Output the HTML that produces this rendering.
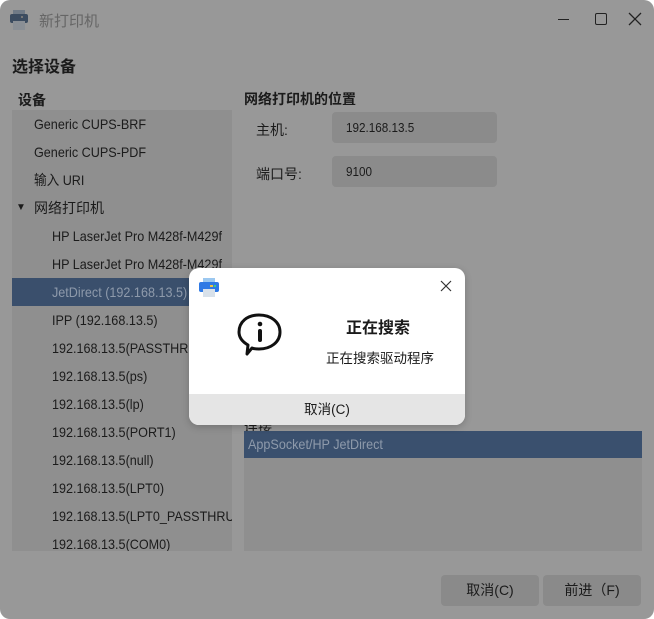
<!DOCTYPE html>
<html><head><meta charset="utf-8"><style>
*{margin:0;padding:0;box-sizing:border-box}
body{width:654px;height:619px;background:#fff;font-family:"Liberation Sans","Noto Sans CJK SC",sans-serif;overflow:hidden;position:relative;color:#1b1b1b;font-size:14px}
.win{position:absolute;left:0;top:0;width:654px;height:619px;background:#989898;border-radius:10px}
.a{position:absolute;white-space:nowrap}
.list{position:absolute;left:12px;top:110px;width:220px;height:441px;background:#8f8f8f;overflow:hidden}
.it{position:absolute;height:28px;line-height:28px;white-space:nowrap}
.n{display:inline-block;transform:scaleX(0.9);transform-origin:left center}
.inp{position:absolute;left:332px;width:165px;height:31px;background:#8b8b8b;border-radius:4px;line-height:31px;padding-left:14px;font-size:13px}
.btn{position:absolute;top:575px;width:98px;height:31px;background:#8a8a8a;border-radius:4px;text-align:center;line-height:31px}
.dlg{position:absolute;left:189px;top:268px;width:276px;height:157px;background:#fff;border-radius:10px;overflow:hidden;box-shadow:0 2px 8px rgba(0,0,0,.2)}
</style></head><body>
<div class="win">
<svg class="a" style="left:9px;top:9px" width="20" height="22" viewBox="0 0 20 22"><rect x="4" y="1" width="12" height="5" fill="#707a86"/><rect x="1" y="5" width="18" height="9" rx="2" fill="#3c4c60"/><rect x="4" y="12" width="12" height="9" fill="#8a8f95"/><rect x="12" y="7" width="2" height="2" fill="#777"/></svg>
<div class="a" style="left:39px;top:10px;font-size:15px;color:#666">新打印机</div>
<div class="a" style="left:558px;top:19px;width:11px;height:1px;background:#222"></div>
<div class="a" style="left:595px;top:13px;width:12px;height:12px;border:1.3px solid #222;border-radius:2px"></div>
<svg class="a" style="left:628px;top:12px" width="14" height="14"><path d="M1 1L13 13M13 1L1 13" stroke="#222" stroke-width="1.3"/></svg>
<div class="a" style="left:12px;top:53px;font-size:16px;font-weight:bold">选择设备</div>
<div class="list">
<div class="it" style="left:22px;top:0"><span class="n">Generic CUPS-BRF</span></div>
<div class="it" style="left:22px;top:28px"><span class="n">Generic CUPS-PDF</span></div>
<div class="it" style="left:22px;top:56px"><span class="n">输入 URI</span></div>
<div class="it" style="left:4px;top:84px;font-size:10px">▼</div>
<div class="it" style="left:22px;top:84px">网络打印机</div>
<div class="it" style="left:40px;top:112px"><span class="n">HP LaserJet Pro M428f-M429f</span></div>
<div class="it" style="left:40px;top:140px"><span class="n">HP LaserJet Pro M428f-M429f</span></div>
<div class="it" style="left:0;top:168px;width:220px;background:#3a4f6c;color:#8e9aab;padding-left:40px"><span class="n">JetDirect (192.168.13.5)</span></div>
<div class="it" style="left:40px;top:196px"><span class="n">IPP (192.168.13.5)</span></div>
<div class="it" style="left:40px;top:224px"><span class="n">192.168.13.5(PASSTHRU)</span></div>
<div class="it" style="left:40px;top:252px"><span class="n">192.168.13.5(ps)</span></div>
<div class="it" style="left:40px;top:280px"><span class="n">192.168.13.5(lp)</span></div>
<div class="it" style="left:40px;top:308px"><span class="n">192.168.13.5(PORT1)</span></div>
<div class="it" style="left:40px;top:336px"><span class="n">192.168.13.5(null)</span></div>
<div class="it" style="left:40px;top:364px"><span class="n">192.168.13.5(LPT0)</span></div>
<div class="it" style="left:40px;top:392px"><span class="n">192.168.13.5(LPT0_PASSTHRU)</span></div>
<div class="it" style="left:40px;top:420px"><span class="n">192.168.13.5(COM0)</span></div>
</div>
<div class="a" style="left:18px;top:90px;font-weight:bold">设备</div>
<div class="a" style="left:244px;top:89px;font-weight:bold">网络打印机的位置</div>
<div class="a" style="left:256px;top:120px">主机:</div>
<div class="inp" style="top:112px"><span class="n">192.168.13.5</span></div>
<div class="a" style="left:256px;top:164px">端口号:</div>
<div class="inp" style="top:156px"><span class="n">9100</span></div>
<div class="a" style="left:244px;top:417px">连接</div>
<div class="a" style="left:244px;top:431px;width:398px;height:120px;background:#8f8f8f"></div>
<div class="a" style="left:244px;top:431px;width:398px;height:27px;background:#3a506e;color:#8e9aab;line-height:27px;padding-left:4px"><span class="n">AppSocket/HP JetDirect</span></div>
<div class="btn" style="left:441px">取消(C)</div>
<div class="btn" style="left:543px">前进（F)</div>
</div>
<div class="dlg">
<svg class="a" style="left:9px;top:10px" width="22" height="20" viewBox="0 0 22 20"><rect x="5" y="0" width="12" height="4" fill="#9cc8f0"/><rect x="1" y="4" width="20" height="10" rx="2" fill="#2f7ae5"/><rect x="5" y="11" width="12" height="8" fill="#d8e1ea"/><rect x="12" y="7" width="3" height="2" fill="#f5c242"/><rect x="16" y="7" width="2" height="2" fill="#3fd07a"/></svg>
<svg class="a" style="left:251px;top:12px" width="12" height="12"><path d="M1 1L11 11M11 1L1 11" stroke="#333" stroke-width="1.2"/></svg>
<svg class="a" style="left:48px;top:44px" width="46" height="46" viewBox="0 0 46 46"><path d="M10 42 L11 33 C4 29 2 24 2 20 C2 10 10 3 22 3 C34 3 43 10 43 20 C43 30 34 37 22 37 C19 37 17 37 15 36 Z" fill="none" stroke="#111" stroke-width="3" stroke-linejoin="round"/><circle cx="23" cy="12" r="2.3" fill="#111"/><rect x="21" y="17" width="4" height="13" rx="2" fill="#111"/></svg>
<div class="a" style="left:157px;top:46px;font-size:16px;font-weight:bold">正在搜索</div>
<div class="a" style="left:137px;top:79px;font-size:13.5px">正在搜索驱动程序</div>
<div class="a" style="left:0;top:126px;width:276px;height:31px;background:#e5e5e5;text-align:center;line-height:31px;font-size:13.5px">取消(C)</div>
</div>
</body></html>
